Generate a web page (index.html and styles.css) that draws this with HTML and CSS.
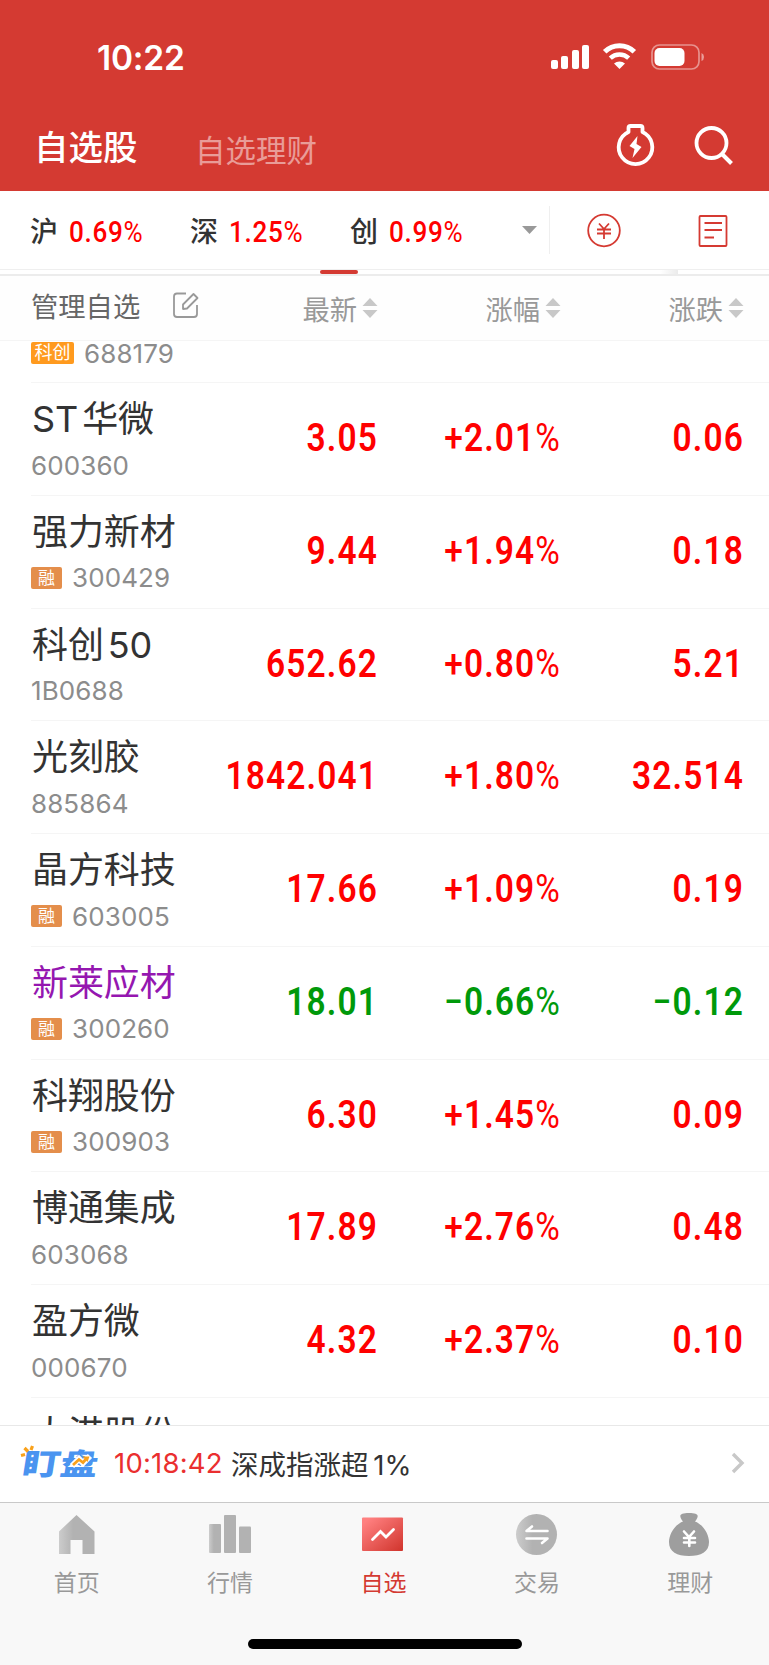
FILE: index.html
```
<!DOCTYPE html>
<html lang="zh-CN">
<head>
    <meta charset="UTF-8">
    <meta name="viewport" content="width=device-width, initial-scale=1.0">
    <title>自选股</title>
    <link rel="stylesheet" href="styles.css">
</head>
<body>
    <div class="header">
        <div class="status">
            <div class="time">10:22</div>
            <svg class="signal" width="154" height="28" viewBox="0 0 154 28">
                <g fill="#fff">
                    <rect x="0" y="17" width="7" height="9" rx="2"/>
                    <rect x="10" y="13" width="7" height="13" rx="2"/>
                    <rect x="21" y="7" width="7" height="19" rx="2"/>
                    <rect x="31" y="2" width="7" height="24" rx="2"/>
                    <path d="M63 20.500L68.500 26L74 20.500A8.500 8.500 0 0 0 63 20.500Z"/>
                </g>
                <path d="M54.200 8.800A21 21 0 0 1 83.800 8.800" transform="translate(-.5 0)" fill="none" stroke="#fff" stroke-width="5"/>
                <path d="M59.300 15.200A13.500 13.500 0 0 1 77.700 15.200" fill="none" stroke="#fff" stroke-width="4.500"/>
                <rect x="101" y="2" width="47" height="24" rx="7.500" fill="none" stroke="#fff" stroke-opacity=".45" stroke-width="1.700"/>
                <rect x="103.500" y="5" width="30" height="18" rx="5" fill="#fff"/>
                <path d="M150.500 10Q153 11 153 14Q153 17 150.500 18Z" fill="#fff" fill-opacity=".5"/>
            </svg>
        </div>
        <div class="nav">
            <div class="nav-on">自选股</div>
            <div class="nav-off">自选理财</div>
            <svg class="nav-icon" width="118" height="44" viewBox="0 0 118 44" fill="none" stroke="#fff" stroke-width="3.800">
                <path d="M12.500 10V6Q12.500 4 14.500 4H24.500Q26.500 4 26.500 6V10A16.800 16.800 0 1 1 12.500 10Z" stroke-linejoin="round"/>
                <path d="M21.500 14L13.500 24L18.500 27L16.500 36L25.500 25L20.500 22Z" fill="#fff" stroke="none"/>
                <circle cx="95.500" cy="21" r="15"/>
                <path d="M105.500 31.500L115.500 41.500" stroke-width="4"/>
            </svg>
        </div>
    </div>
    <div class="index">
        <div class="index-item">沪<span class="rate">0.69<i>%</i></span></div>
        <div class="index-item">深<span class="rate">1.25<i>%</i></span></div>
        <div class="index-item">创<span class="rate">0.99<i>%</i></span></div>
        <div class="caret"></div>
        <div class="split"></div>
        <svg class="index-icon" width="142" height="36" viewBox="0 0 142 36" fill="none" stroke="#d53a32" stroke-width="1.800">
            <circle cx="18" cy="18.500" r="15.800"/>
            <path d="M13 11.500L18 17L23 11.500M11 17.500H25M11 21.500H25M18 17V27"/>
            <rect x="113.500" y="4" width="27" height="30" rx="1"/>
            <path d="M118.500 11H136M118.500 18H136M118.500 25.500H128"/>
        </svg>
    </div>
    <div class="strip">
        <div class="strip-on"></div>
        <div class="strip-shade"></div>
    </div>
    <div class="head">
        <div class="manage">管理自选
            <svg width="28" height="28" viewBox="0 0 28 28" fill="none" stroke="#999" stroke-width="1.800">
                <path d="M14 2.500H5Q2 2.500 2 5.500V23Q2 26 5 26H22Q25 26 25 23V14"/>
                <path d="M11 18V13.500L21.500 3L25.500 7L15 17.500Z" stroke-linejoin="round"/>
            </svg>
        </div>
        <div class="sort">最新<svg width="16" height="20" viewBox="0 0 16 20"><path d="M8 0L15.500 8H.5ZM8 20L15.500 12H.5Z" fill="#c8c8c8"/></svg></div>
        <div class="sort">涨幅<svg width="16" height="20" viewBox="0 0 16 20"><path d="M8 0L15.500 8H.5ZM8 20L15.500 12H.5Z" fill="#c8c8c8"/></svg></div>
        <div class="sort">涨跌<svg width="16" height="20" viewBox="0 0 16 20"><path d="M8 0L15.500 8H.5ZM8 20L15.500 12H.5Z" fill="#c8c8c8"/></svg></div>
    </div>
    <div class="list">
        <div class="row first">
            <div class="stock">
                <div class="code"><span class="tag kc">科创</span>688179</div>
            </div>
        </div>
        <div class="row">
            <div class="stock">
                <div class="name">ST 华微</div>
                <div class="code">600360</div>
            </div>
            <div class="num">3.05</div>
            <div class="num"><b>+</b>2.01<i>%</i></div>
            <div class="num">0.06</div>
        </div>
        <div class="row">
            <div class="stock">
                <div class="name">强力新材</div>
                <div class="code"><span class="tag">融</span>300429</div>
            </div>
            <div class="num">9.44</div>
            <div class="num"><b>+</b>1.94<i>%</i></div>
            <div class="num">0.18</div>
        </div>
        <div class="row">
            <div class="stock">
                <div class="name">科创 50</div>
                <div class="code">1B0688</div>
            </div>
            <div class="num">652.62</div>
            <div class="num"><b>+</b>0.80<i>%</i></div>
            <div class="num">5.21</div>
        </div>
        <div class="row">
            <div class="stock">
                <div class="name">光刻胶</div>
                <div class="code">885864</div>
            </div>
            <div class="num">1842.041</div>
            <div class="num"><b>+</b>1.80<i>%</i></div>
            <div class="num">32.514</div>
        </div>
        <div class="row">
            <div class="stock">
                <div class="name">晶方科技</div>
                <div class="code"><span class="tag">融</span>603005</div>
            </div>
            <div class="num">17.66</div>
            <div class="num"><b>+</b>1.09<i>%</i></div>
            <div class="num">0.19</div>
        </div>
        <div class="row down">
            <div class="stock">
                <div class="name mark">新莱应材</div>
                <div class="code"><span class="tag">融</span>300260</div>
            </div>
            <div class="num">18.01</div>
            <div class="num"><b>−</b>0.66<i>%</i></div>
            <div class="num"><b>−</b>0.12</div>
        </div>
        <div class="row">
            <div class="stock">
                <div class="name">科翔股份</div>
                <div class="code"><span class="tag">融</span>300903</div>
            </div>
            <div class="num">6.30</div>
            <div class="num"><b>+</b>1.45<i>%</i></div>
            <div class="num">0.09</div>
        </div>
        <div class="row">
            <div class="stock">
                <div class="name">博通集成</div>
                <div class="code">603068</div>
            </div>
            <div class="num">17.89</div>
            <div class="num"><b>+</b>2.76<i>%</i></div>
            <div class="num">0.48</div>
        </div>
        <div class="row">
            <div class="stock">
                <div class="name">盈方微</div>
                <div class="code">000670</div>
            </div>
            <div class="num">4.32</div>
            <div class="num"><b>+</b>2.37<i>%</i></div>
            <div class="num">0.10</div>
        </div>
        <div class="row">
            <div class="stock">
                <div class="name">大港股份</div>
            </div>
        </div>
    </div>
    <div class="news">
        <svg class="logo" width="80" height="36" viewBox="0 0 80 36">
            <g transform="translate(0 30) skewX(-9) scale(1.250 1)">
                <text class="logo-text" x="1" y="0">盯盘</text>
            </g>
            <path d="M52 21L59 14L63 18L70 11" fill="none" stroke="#fff" stroke-width="6"/>
            <path d="M53 20L59 14.500L63 17.500L67 13" fill="none" stroke="#f9a11b" stroke-width="2.800"/>
            <path d="M62.500 11.500H69.500L67.500 17Z" fill="#f9a11b"/>
            <path d="M1 10.500L5 9.500M4.500 3L8 6.500M12.500 1L11 5" stroke="#f9a11b" stroke-width="3.200"/>
        </svg>
        <span class="news-time">10:18:42</span>
        <span class="news-text">深成指涨超 1%</span>
        <svg class="more" width="14" height="22" viewBox="0 0 14 22"><path d="M2 2L11 11L2 20" fill="none" stroke="#c8c8c8" stroke-width="3.400"/></svg>
    </div>
    <div class="tabs">
        <div class="tab">
            <svg width="44" height="44" viewBox="0 0 44 44">
                <defs>
                    <linearGradient id="gray"><stop offset="0" stop-color="#ccc"/><stop offset=".4" stop-color="#b2b2b2"/></linearGradient>
                    <linearGradient id="red" x1="0" y1="0" x2="1" y2="1"><stop offset=".1" stop-color="#ff8080"/><stop offset="1" stop-color="#d0342c"/></linearGradient>
                </defs>
                <path d="M4 18.500L21.500 2L39.500 18.500V41H27.500V27H15.500V41H4Z" fill="url(#gray)"/>
            </svg>
            首页
        </div>
        <div class="tab">
            <svg width="44" height="44" viewBox="0 0 44 44">
                <rect x="1" y="11" width="12" height="29" rx="1" fill="url(#gray)"/>
                <rect x="16" y="2" width="12" height="38" rx="1" fill="#b2b2b2"/>
                <rect x="31" y="13.500" width="12" height="26.500" rx="1" fill="#b2b2b2"/>
            </svg>
            行情
        </div>
        <div class="tab on">
            <svg width="44" height="44" viewBox="0 0 44 44">
                <rect x="1" y="4.500" width="41" height="33.500" rx="1" fill="url(#red)"/>
                <path d="M11.500 26.500L19.500 18.500L25 24L32.500 16.500" fill="none" stroke="#fff" stroke-width="2.800" stroke-linecap="round"/>
            </svg>
            自选
        </div>
        <div class="tab">
            <svg width="44" height="44" viewBox="0 0 44 44">
                <circle cx="21.500" cy="21.500" r="20.500" fill="url(#gray)"/>
                <path d="M32.500 18H11.500L17 13.500M11.500 25.500H32.500L27 30" fill="none" stroke="#fff" stroke-width="2.600" stroke-linecap="round" stroke-linejoin="round"/>
            </svg>
            交易
        </div>
        <div class="tab">
            <svg width="44" height="44" viewBox="0 0 44 44">
                <path d="M15 8.500C10 2 12 0 21 0C30 0 32 2 27 8.500C36 12 41 22 41 29C41 39 33 43 21 43C9 43 1 39 1 29C1 22 6 12 15 8.500Z" fill="#9e9e9e"/>
                <path d="M16 18.500L21 24L26 18.500M16 25H27M16 29.500H27M21.300 24V33" fill="none" stroke="#fff" stroke-width="2.600" stroke-linecap="round"/>
            </svg>
            理财
        </div>
    </div>
    <div class="home"><div class="home-bar"></div></div>
</body>
</html>
```
FILE: styles.css
```
*{
    box-sizing: border-box;
}
body{
    margin: 0;
    width: 769px;
    height: 1665px;
    overflow: hidden;
    display: flex;
    flex-direction: column;
    background-color: #fff;
    color: #333;
    font-family: Inter, "Noto Sans CJK SC", sans-serif;
}
i, b{
    font-style: normal;
}
svg{
    flex: none;
    overflow: visible;
}
.header{
    height: 191px;
    flex: none;
    background-color: #d43a32;
    color: #fff;
}
.status{
    display: flex;
    align-items: center;
    height: 114px;
    padding: 0 64px 0 97px;
}
.time{
    padding-top: 2px;
    font-size: 33.500px;
    font-weight: 580;
    letter-spacing: -0.2px;
}
.signal{
    margin-left: auto;
}
.nav{
    display: flex;
    align-items: center;
    height: 64px;
    padding: 0 35px 0 34px;
}
.nav-on{
    width: 161px;
    padding-top: 4px;
    font-size: 34.500px;
    font-weight: 500;
    line-height: 50px;
}
.nav-off{
    font-size: 30.500px;
    line-height: 44px;
    padding-top: 9px;
    color: rgba(255,255,255,.5);
}
.nav-icon{
    margin-left: auto;
    margin-bottom: 4px;
}
.index{
    display: flex;
    align-items: center;
    height: 79px;
    flex: none;
    padding-left: 30px;
    border-bottom: 1px solid #efefef;
}
.index-item{
    display: flex;
    align-items: center;
    width: 160px;
    padding-top: 3px;
    font-size: 28px;
    font-weight: 500;
    line-height: 40px;
}
.rate{
    margin-left: 11px;
    font-family: Roboto, sans-serif;
    font-size: 30px;
    letter-spacing: 0.8px;
    color: #f00;
    transform: scaleX(.87);
    transform-origin: left;
}
.rate i{
    font-weight: 400;
}
.caret{
    width: 15px;
    height: 8px;
    margin-left: 12px;
    background-color: #999;
    clip-path: polygon(0 0, 100% 0, 50% 100%);
}
.split{
    width: 1px;
    height: 48px;
    margin: 0 36px 0 12px;
    background-color: #efefef;
}
.strip{
    display: flex;
    height: 6px;
    flex: none;
    border-bottom: 2px solid #ececec;
}
.strip-on{
    width: 38px;
    height: 4px;
    margin-left: 320px;
    border-radius: 2px;
    background-color: #d43a32;
}
.strip-shade{
    width: 18px;
    margin-left: 302px;
    background: linear-gradient(to right, #fff, #ebebeb);
}
.head, .row{
    display: grid;
    grid-template-columns: 160px 187px 183px 183px;
    flex: none;
}
.head{
    height: 65px;
    padding-left: 31px;
    background-color: #fefefe;
    border-bottom: 1px solid #f5f5f5;
}
.manage, .sort{
    display: flex;
    align-items: center;
    height: 58px;
    font-size: 27.300px;
    white-space: nowrap;
}
.manage{
    gap: 32px;
    color: #666;
}
.sort{
    justify-content: flex-end;
    height: 64px;
    color: #999;
    gap: 5px;
}
.list{
    height: 1084px;
    flex: none;
    overflow: hidden;
}
.row{
    height: 112.770px;
    margin-left: 31px;
    border-bottom: 1px solid #f5f5f5;
}
.first{
    height: 42px;
}
.name{
    height: 51px;
    margin-top: 10px;
    padding-left: 1px;
    font-size: 36px;
    line-height: 53px;
    letter-spacing: -0.1px;
    word-spacing: -6px;
    white-space: nowrap;
}
.mark{
    color: #9517b0;
}
.code{
    display: flex;
    align-items: center;
    height: 42px;
    font-size: 26px;
    letter-spacing: 0.1px;
    color: #8c8c8c;
}
.first .code{
    height: 24px;
}
.tag{
    width: 31px;
    height: 22px;
    margin-right: 10px;
    border-radius: 2px;
    background-color: #e48e4b;
    color: #fff;
    font-size: 17px;
    line-height: 22px;
    text-align: center;
}
.kc{
    width: 43px;
    background-color: #ff9a1e;
    font-size: 18px;
}
.num{
    height: 110px;
    color: #f00;
    font-family: Roboto, sans-serif;
    font-size: 38.500px;
    font-weight: 600;
    line-height: 110px;
    letter-spacing: 1.300px;
    text-align: right;
    white-space: nowrap;
    transform: scaleX(.87);
    transform-origin: right;
}
.num b{
    font-weight: 500;
}
.num i{
    font-weight: 450;
}
.down .num{
    color: #00990a;
}
.news{
    display: flex;
    align-items: center;
    height: 77px;
    flex: none;
    padding: 0 24px 2px 20px;
    border-top: 1px solid #e8e8e8;
    font-size: 27.500px;
    white-space: pre;
}
.logo-text{
    font-family: "Noto Sans CJK SC", sans-serif;
    font-size: 30px;
    font-weight: 900;
    fill: #4a94f0;
}
.news-time{
    width: 117px;
    margin-left: 14px;
    color: #ea2f2f;
    letter-spacing: 0.2px;
}
.news-text{
    word-spacing: -3px;
}
.more{
    margin-left: auto;
}
.tabs{
    display: grid;
    grid-template-columns: repeat(5, 1fr);
    height: 118px;
    flex: none;
    padding-right: 2px;
    border-top: 1px solid #c9c9c9;
    background-color: #f8f8f8;
}
.tab{
    display: flex;
    flex-direction: column;
    align-items: center;
    padding-top: 10px;
    gap: 8px;
    font-size: 23px;
    line-height: 36px;
    color: #999;
}
.on{
    color: #d43a32;
}
.home{
    flex: 1;
    padding-top: 19px;
    background-color: #f8f8f8;
}
.home-bar{
    width: 274px;
    height: 10px;
    margin: 0 auto;
    border-radius: 5px;
    background-color: #000;
}
```
